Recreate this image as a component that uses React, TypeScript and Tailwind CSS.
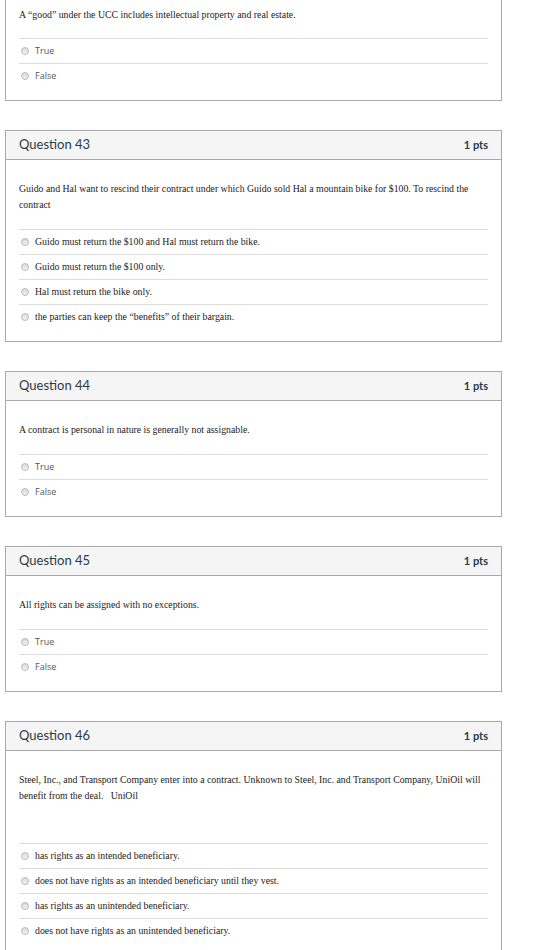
import React from "react";

type Question = {
	id: number;
	text: string[];
	options: string[];
	sans?: boolean;
	extraGap?: boolean;
};

const questions: Question[] = [
	{
		id: 43,
		text: [
			"Guido and Hal want to rescind their contract under which Guido sold Hal a mountain bike for $100. To rescind the",
			"contract",
		],
		options: [
			"Guido must return the $100 and Hal must return the bike.",
			"Guido must return the $100 only.",
			"Hal must return the bike only.",
			"the parties can keep the \u201cbenefits\u201d of their bargain.",
		],
	},
	{
		id: 44,
		text: ["A contract is personal in nature is generally not assignable."],
		options: ["True", "False"],
		sans: true,
	},
	{
		id: 45,
		text: ["All rights can be assigned with no exceptions."],
		options: ["True", "False"],
		sans: true,
	},
	{
		id: 46,
		text: [
			"Steel, Inc., and Transport Company enter into a contract. Unknown to Steel, Inc. and Transport Company, UniOil will",
			"benefit from the deal.\u00a0\u00a0 UniOil",
		],
		options: [
			"has rights as an intended beneficiary.",
			"does not have rights as an intended beneficiary until they vest.",
			"has rights as an unintended beneficiary.",
			"does not have rights as an unintended beneficiary.",
		],
		extraGap: true,
	},
];

function Radio() {
	return (
		<span className="mr-[6px] ml-[2px] inline-block h-[8px] w-[8px] shrink-0 rounded-full border border-[#b9b9b9] bg-gradient-to-b from-[#dcdcdc] to-[#f2f2f2]" />
	);
}

function Options({ options, sans }: { options: string[]; sans?: boolean }) {
	return (
		<div className="flex flex-col">
			{options.map((opt) => (
				<div
					className="flex h-[25px] items-center border-t border-[#dcdcdc]"
					key={opt}
				>
					<Radio />
					<span
						className={
							sans
								? "text-[9px] text-[#555] [font-family:'Open_Sans',sans-serif]"
								: "whitespace-nowrap text-[9.8px] text-[#222] [font-family:'Liberation_Serif',serif]"
						}
					>
						{opt}
					</span>
				</div>
			))}
		</div>
	);
}

function QuestionCard({ q }: { q: Question }) {
	return (
		<div className="mx-[5px] w-[497px] border border-[#a9a9a9] bg-white">
			<div className="flex h-[29px] items-center justify-between border-b border-[#a9a9a9] bg-[#f5f5f5] px-[13px] text-[#2d3b45] [font-family:Lato,sans-serif]">
				<span className="text-[13px]">Question {q.id}</span>
				<span className="text-[11px] font-bold">1 pts</span>
			</div>
			<div className="px-[13px] pt-[21px] pb-[12px]">
				<div
					className={`text-[9.8px] leading-[16px] text-[#222] [font-family:'Liberation_Serif',serif] ${
						q.extraGap ? "mb-[39px]" : "mb-[16px]"
					}`}
				>
					{q.text.map((line) => (
						<div className="whitespace-nowrap" key={line}>
							{line}
						</div>
					))}
				</div>
				<Options options={q.options} sans={q.sans} />
			</div>
		</div>
	);
}

export default function App() {
	return (
		<div className="flex min-h-[950px] w-[555px] flex-col gap-[29px] overflow-hidden bg-white">
			<div className="mx-[5px] w-[497px] border-x border-b border-[#a9a9a9] bg-white px-[13px] pt-[7px] pb-[12px]">
				<div className="mb-[15px] whitespace-nowrap text-[9.8px] leading-[16px] text-[#222] [font-family:'Liberation_Serif',serif]">
					A &ldquo;good&rdquo; under the UCC includes intellectual property and
					real estate.
				</div>
				<Options options={["True", "False"]} sans />
			</div>
			{questions.map((q) => (
				<QuestionCard key={q.id} q={q} />
			))}
		</div>
	);
}
